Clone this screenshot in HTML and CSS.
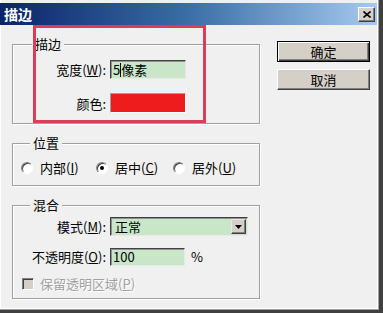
FILE: index.html
```html
<!DOCTYPE html>
<html lang="zh-CN">
<head>
<meta charset="utf-8">
<title>描边</title>
<link rel="stylesheet" href="styles.css">
</head>
<body>
<div class="window">
  <div class="titlebar">
    <span class="title">描边</span>
    <span class="close"><svg width="8" height="7" viewBox="0 0 8 7"><path d="M0.5 0.5 L7.5 6.5 M7.5 0.5 L0.5 6.5" stroke="#000" stroke-width="1.6" fill="none"/></svg></span>
  </div>
  <div class="content">
    <div class="groups">
      <div class="group g1">
        <span class="legend">描边</span>
        <div class="form">
          <span class="label">宽度(<u>W</u>):</span>
          <span class="field">5<span class="caret"></span>像素</span>
          <span class="label">颜色:</span>
          <span class="swatch"></span>
        </div>
      </div>
      <div class="group g2">
        <span class="legend">位置</span>
        <div class="radios">
          <span class="radio-item"><span class="radio"></span><span>内部(<u>I</u>)</span></span>
          <span class="radio-item"><span class="radio checked"></span><span>居中(<u>C</u>)</span></span>
          <span class="radio-item"><span class="radio"></span><span>居外(<u>U</u>)</span></span>
        </div>
      </div>
      <div class="group g3">
        <span class="legend">混合</span>
        <div class="form form3">
          <span class="label">模式(<u>M</u>):</span>
          <span class="select"><span class="select-text">正常</span><span class="arrow"><svg width="7" height="4" viewBox="0 0 7 4"><path d="M0 0 H7 L3.5 4 Z" fill="#000"/></svg></span></span>
          <span class="label">不透明度(<u>O</u>):</span>
          <span class="opacity"><span class="field narrow">100</span><span class="pct">%</span></span>
        </div>
        <div class="check-row"><span class="checkbox"></span><span class="disabled">保留透明区域(<u>P</u>)</span></div>
      </div>
    </div>
    <div class="buttons">
      <span class="btn default">确定</span>
      <span class="btn">取消</span>
    </div>
  </div>
  <div class="annotation"></div>
</div>
</body>
</html>
```
FILE: styles.css
```css
html, body {
  margin: 0;
  padding: 0;
}
body {
  width: 383px;
  height: 313px;
  overflow: hidden;
  background: #f0f0f0;
  font-family: "Noto Sans CJK SC", "Noto Sans", sans-serif;
  font-size: 13px;
  color: #000;
}
.window {
  position: relative;
  box-sizing: border-box;
  width: 383px;
  height: 313px;
  padding-top: 3px;
  background: #f0f0f0;
  border-right: 4px solid #404040;
  border-bottom: 3px solid #404040;
  box-shadow: inset -1px -1px 0 #a0a0a0, inset -2px -2px 0 #fff, inset 1px 0 0 #fff;
}
.titlebar {
  height: 22px;
  margin-right: 2px;
  display: flex;
  align-items: center;
  justify-content: space-between;
  padding: 0 2px 0 4px;
  background: linear-gradient(to right, #0a246a 0%, #3a6ea5 50%, #a6caf0 100%);
  color: #fff;
  font-weight: bold;
  font-size: 14px;
}
.title {
  line-height: 22px;
}
.close {
  box-sizing: border-box;
  width: 17px;
  height: 15px;
  display: flex;
  align-items: center;
  justify-content: center;
  background: #d4d0c8;
  border: 1px solid;
  border-color: #fff #404040 #404040 #fff;
  box-shadow: inset -1px -1px 0 #808080;
}
.content {
  display: flex;
  align-items: flex-start;
}
.groups {
  margin-left: 12px;
  width: 248px;
  padding-top: 19px;
}
.group {
  box-sizing: border-box;
  border: 1px solid #a0a0a0;
  box-shadow: inset 1px 1px 0 #fff, 1px 1px 0 #fff;
}
.g1 { height: 80px; }
.g2 { height: 43px; margin-top: 19px; }
.g3 { height: 94px; margin-top: 19px; }
.legend {
  display: block;
  width: max-content;
  margin: -9px 0 0 19px;
  padding: 0 3px;
  background: #f0f0f0;
  line-height: 16px;
}
.g2 .legend, .g3 .legend { margin-left: 17px; }
.form {
  display: grid;
  grid-template-columns: 93px 76px;
  column-gap: 4px;
  row-gap: 14px;
  align-items: center;
  margin-top: 8px;
}
.form3 {
  grid-template-columns: 93px 138px;
  row-gap: 11px;
  margin-top: 4px;
}
.label {
  text-align: right;
  line-height: 19px;
  white-space: nowrap;
}
.field {
  box-sizing: border-box;
  display: block;
  height: 19px;
  padding-left: 2px;
  border: 1px solid;
  border-color: #404040 #e8e8e8 #e8e8e8 #404040;
  box-shadow: inset 1px 1px 0 #909090;
  background: #c9e6c9;
  line-height: 17px;
  white-space: nowrap;
}
.caret {
  display: inline-block;
  width: 1px;
  height: 14px;
  background: #000;
  vertical-align: -2px;
}
.swatch {
  box-sizing: border-box;
  display: block;
  height: 20px;
  border: 1px solid;
  border-color: #a0a0a0 #fff #fff #a0a0a0;
  background: #ee1c1c;
}
.radios {
  display: grid;
  grid-template-columns: 75px 77px auto;
  margin: 9px 0 0 8px;
}
.radio-item {
  display: flex;
  align-items: center;
  gap: 7px;
  line-height: 16px;
  white-space: nowrap;
}
.radio {
  box-sizing: border-box;
  width: 12px;
  height: 12px;
  border-radius: 50%;
  border: 1px solid;
  border-color: #808080 #fff #fff #808080;
  box-shadow: inset 1px 1px 0 #404040;
  background: #fff;
  display: flex;
  align-items: center;
  justify-content: center;
}
.radio.checked::after {
  content: "";
  width: 4px;
  height: 4px;
  border-radius: 50%;
  background: #000;
}
.select {
  box-sizing: border-box;
  display: flex;
  align-items: center;
  height: 19px;
  border: 1px solid;
  border-color: #404040 #e8e8e8 #e8e8e8 #404040;
  box-shadow: inset 1px 1px 0 #909090;
  background: #c9e6c9;
  padding: 0 1px 0 4px;
}
.select-text {
  flex: 1;
  line-height: 17px;
}
.arrow {
  box-sizing: border-box;
  width: 15px;
  height: 15px;
  display: flex;
  align-items: center;
  justify-content: center;
  background: #d4d0c8;
  border: 1px solid;
  border-color: #e8e8e8 #404040 #404040 #e8e8e8;
  box-shadow: inset -1px -1px 0 #808080;
}
.opacity {
  display: flex;
  align-items: center;
  gap: 6px;
}
.narrow {
  width: 75px;
  height: 18px;
  line-height: 16px;
}
.pct {
  line-height: 18px;
}
.check-row {
  display: flex;
  align-items: center;
  gap: 6px;
  margin: 10px 0 0 9px;
}
.checkbox {
  box-sizing: border-box;
  width: 12px;
  height: 12px;
  border: 1px solid;
  border-color: #808080 #fff #fff #808080;
  box-shadow: inset 1px 1px 0 #404040;
  background: #d4d0c8;
}
.disabled {
  color: #a0a0a0;
  text-shadow: 1px 1px 0 #fff;
  line-height: 16px;
}
.buttons {
  margin: 16px 0 0 17px;
  width: 93px;
  display: flex;
  flex-direction: column;
  gap: 7px;
}
.btn {
  box-sizing: border-box;
  height: 21px;
  display: flex;
  align-items: center;
  justify-content: center;
  background: #d4d0c8;
  border: 1px solid;
  border-color: #fff #404040 #404040 #fff;
  box-shadow: inset -1px -1px 0 #808080;
  line-height: 19px;
}
.btn.default {
  border: 1px solid #000;
  box-shadow: inset 1px 1px 0 #fff, inset -1px -1px 0 #404040, inset -2px -2px 0 #808080;
}
.annotation {
  position: absolute;
  left: 33px;
  top: 25px;
  width: 173px;
  height: 98px;
  box-sizing: border-box;
  border: 3px solid #dc3c55;
  pointer-events: none;
}
```
